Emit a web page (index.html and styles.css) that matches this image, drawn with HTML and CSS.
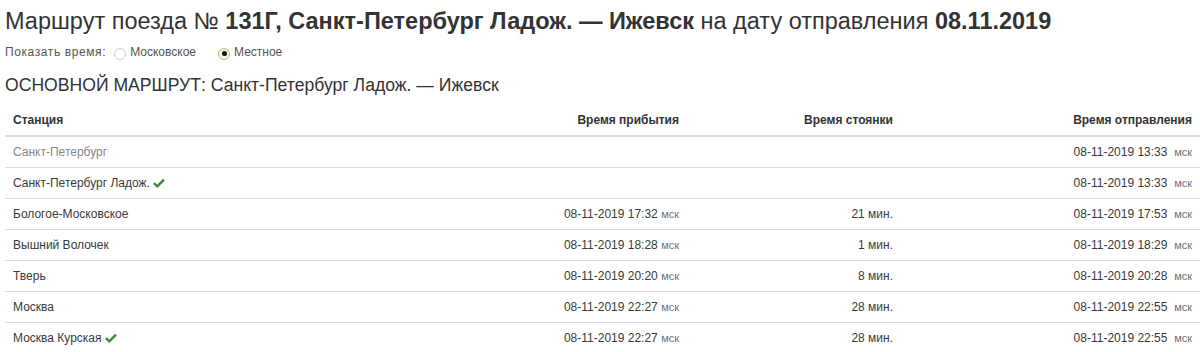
FILE: index.html
```html
<!DOCTYPE html>
<html lang="ru">
<head>
<meta charset="utf-8">
<title>Маршрут поезда</title>
<link rel="stylesheet" href="styles.css">
</head>
<body>
<div class="page">
  <h1 class="title">Маршрут поезда № <b>131Г, Санкт-Петербург Ладож. — Ижевск</b> на дату отправления <b>08.11.2019</b></h1>
  <div class="timeswitch">
    <span class="label">Показать время:</span>
    <label class="opt"><span class="radio"></span>Московское</label>
    <label class="opt"><span class="radio checked"></span>Местное</label>
  </div>
  <h2 class="subtitle">ОСНОВНОЙ МАРШРУТ: Санкт-Петербург Ладож. — Ижевск</h2>
  <table class="route">
    <colgroup>
      <col class="c1"><col class="c2"><col class="c3"><col class="c4">
    </colgroup>
    <thead>
      <tr><th class="l">Станция</th><th>Время прибытия</th><th>Время стоянки</th><th>Время отправления</th></tr>
    </thead>
    <tbody>
      <tr><td class="l muted">Санкт-Петербург</td><td></td><td></td><td>08-11-2019 13:33 &nbsp;<span class="tz">мск</span></td></tr>
      <tr><td class="l">Санкт-Петербург Ладож. <span class="ok"><svg viewBox="0 0 12 10" width="12" height="10"><path d="M1 5.2 L4.3 8.3 L11 1.6" fill="none" stroke="#3d8a3a" stroke-width="2.5"/></svg></span></td><td></td><td></td><td>08-11-2019 13:33 &nbsp;<span class="tz">мск</span></td></tr>
      <tr><td class="l">Бологое-Московское</td><td>08-11-2019 17:32 <span class="tz">мск</span></td><td>21 мин.</td><td>08-11-2019 17:53 &nbsp;<span class="tz">мск</span></td></tr>
      <tr><td class="l">Вышний Волочек</td><td>08-11-2019 18:28 <span class="tz">мск</span></td><td>1 мин.</td><td>08-11-2019 18:29 &nbsp;<span class="tz">мск</span></td></tr>
      <tr><td class="l">Тверь</td><td>08-11-2019 20:20 <span class="tz">мск</span></td><td>8 мин.</td><td>08-11-2019 20:28 &nbsp;<span class="tz">мск</span></td></tr>
      <tr><td class="l">Москва</td><td>08-11-2019 22:27 <span class="tz">мск</span></td><td>28 мин.</td><td>08-11-2019 22:55 &nbsp;<span class="tz">мск</span></td></tr>
      <tr><td class="l">Москва Курская <span class="ok"><svg viewBox="0 0 12 10" width="12" height="10"><path d="M1 5.2 L4.3 8.3 L11 1.6" fill="none" stroke="#3d8a3a" stroke-width="2.5"/></svg></span></td><td>08-11-2019 22:27 <span class="tz">мск</span></td><td>28 мин.</td><td>08-11-2019 22:55 &nbsp;<span class="tz">мск</span></td></tr>
    </tbody>
  </table>
</div>
</body>
</html>
```
FILE: styles.css
```css
html, body {
  margin: 0;
  padding: 0;
  background: #fff;
}
body {
  font-family: "Liberation Sans", Arial, sans-serif;
  color: #333;
  overflow: hidden;
}
.page {
  padding: 7px 0 0 5px;
  width: 1195px;
}
.title {
  margin: 0;
  font-size: 23.5px;
  font-weight: normal;
  line-height: 28px;
  color: #333;
}
.title b {
  font-weight: bold;
}
.timeswitch {
  display: flex;
  align-items: center;
  margin-top: 10px;
  height: 14px;
  font-size: 12px;
  color: #555;
}
.timeswitch .label {
  letter-spacing: 0.6px;
  margin-right: 8px;
}
.opt {
  display: flex;
  align-items: center;
  margin-right: 22px;
}
.radio {
  width: 12px;
  height: 12px;
  box-sizing: border-box;
  border: 1px solid #ccc;
  border-radius: 50%;
  margin-right: 4px;
  margin-top: 3px;
  background: #fff;
  display: flex;
  align-items: center;
  justify-content: center;
}
.radio.checked {
  border-color: #c9b98e;
  background: #faf3e0;
}
.radio.checked::after {
  content: "";
  width: 5px;
  height: 5px;
  border-radius: 50%;
  background: #111;
}
.subtitle {
  margin: 15px 0 0;
  font-size: 17.6px;
  font-weight: normal;
  line-height: 22px;
  color: #333;
}
.route {
  margin-top: 9px;
  width: 1195px;
  border-collapse: collapse;
  table-layout: fixed;
  font-size: 12px;
}
.c1 { width: 400px; }
.c2 { width: 282px; }
.c3 { width: 214px; }
.c4 { width: 299px; }
.route th, .route td {
  padding: 8px 8px 7px;
  line-height: 15px;
  text-align: right;
  white-space: nowrap;
}
.route th {
  font-weight: bold;
  color: #333;
  border-bottom: 2px solid #ddd;
}
.route td {
  border-top: 1px solid #ddd;
  color: #3a3a3a;
}
.route tbody tr:first-child td {
  border-top: 0;
}
.route .l {
  text-align: left;
}
.route td.muted {
  color: #888;
}
.tz {
  font-size: 11px;
  color: #6f6f7a;
}
.ok {
  display: inline-block;
  vertical-align: -1px;
}
.ok svg {
  display: block;
}
```
